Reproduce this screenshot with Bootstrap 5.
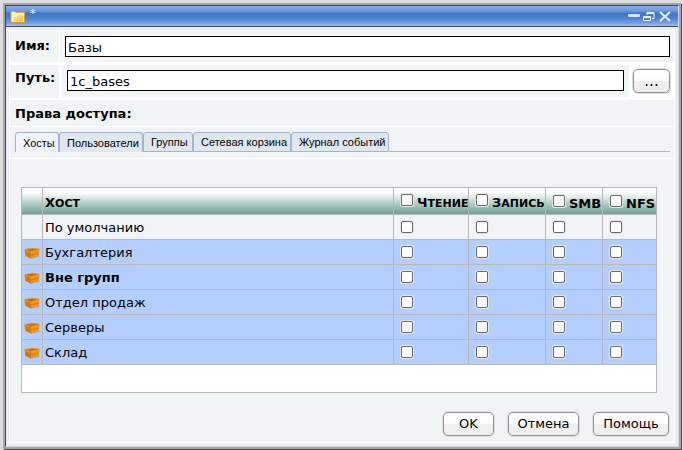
<!DOCTYPE html>
<html lang="ru">
<head>
<meta charset="utf-8">
<meta name="viewport" content="width=device-width, initial-scale=1">
<title>Базы</title>
<link href="https://cdn.jsdelivr.net/npm/bootstrap@5.3.0/dist/css/bootstrap.min.css" rel="stylesheet">
<style>
body{background:#dcdcdc;font:13px/16px "DejaVu Sans",Verdana,sans-serif;color:#000;padding:3px 1px 2px 3px;min-height:100vh}
.win-outer{border:2px solid #a4a7aa;box-shadow:1px 1px 0 #444;margin-right:1px;margin-bottom:1px;flex:1}
.win{border:1px solid #46484c;border-right-color:#d5d7dc;border-bottom-color:#d5d7dc;background:#ecedf5}
.title-bar{height:20px;padding:0 6px 0 4px;background:linear-gradient(#86aceb 0,#6d99dd 25%,#4078c5 36%,#4a82d0 60%,#7ba6ea 90%,#a9c5f0 100%);color:#fff;font-size:11px}
.title-bar button{border:0;background:none;padding:0;display:flex}
.win-body{border-top:1px solid #46484c;padding:3px}
.panel{background:#f0f4f4;border:1px solid #fff}
.lab{font-weight:700;padding:7px 0 0 5px}
.name-row{border-bottom:3px solid #fff}
.name-row .lab{width:50px;border-right:1px solid #fff}
.name-row .fld{padding:5px 4px 5px 5px}
.path-row{border-bottom:1px solid #fff;min-height:35px;background:#fff}
.path-row .lab{width:49px;background:#f0f4f4;padding-top:5px;margin-bottom:1px}
.path-row .fld{margin:0 0 2px 3px;padding:5px 5px 4px;background:#f0f4f4}
.txt{width:100%;height:21px;border:1px solid #000;border-radius:0;padding:2px 2px 0;background:#fff;color:#000;display:block;outline-offset:0}
.push{height:24px;border:1px solid #909090;border-radius:5px;background:linear-gradient(#fff,#fcfcfc 50%,#f0f0f0 51%,#eeeeee);box-shadow:0 0 0 1px #dfe1e1;padding:0;color:#000}
.browse{width:37px;margin:4px 4px 0;font-size:15px}
.w-ok{width:51px}.w-cancel{width:71px}.w-help{width:76px}
.rights{font-weight:700;padding:6px 0 0 5px;height:27px;border-bottom:1px solid #fff}
.tabs{height:32px;padding:5px 4px 0 5px;border-bottom:1px solid #fff}
.tabs button{height:20px;border:1px solid #a4b3ce;border-bottom:0;border-radius:3px 3px 0 0;background:#dfe7ef;font:11px/18px "Liberation Sans",Arial,sans-serif;color:#000;padding:0 0 0 7px;white-space:nowrap;text-align:left}
.tabs button.on{background:#f1f4fa}
.t1{width:44px}.t2{width:84px}.t3{width:50px}.t4{width:98px}.t5{width:98px}
.tab-rest{border-bottom:1px solid #a4b3ce;height:20px}
.tabs .under{border-bottom:1px solid #a4b3ce}
.grid-wrap{padding:28px 17px 0 11px}
.grid-box{background:#fff;border:1px solid #b8b8b8;padding-bottom:27px}
.grid-tbl{width:100%;table-layout:fixed;border-collapse:separate;border-spacing:0}
.grid-tbl th,.grid-tbl td{border:0 solid #b8b8b8;border-width:0 1px 1px 0;padding:2px 0 0 2px;height:25px;vertical-align:middle;white-space:nowrap}
.grid-tbl tr>:last-child{border-right:0}
.grid-tbl th{height:27px;background:linear-gradient(#fff 0,#fbfcfc 20%,#b9d3cd 55%,#6ea396 100%);padding-top:4px}
.caps{display:block;font-size:11px;text-transform:uppercase}
.caps::first-letter{font-size:13px}
.grid-tbl tbody tr{background:#b3cfff}
.grid-tbl tbody tr.base{background:#f0f4f4}
.grid-tbl .ck{padding:0 0 0 7px}
.grid-tbl th.ck label{padding-top:5px;margin-left:4px}
.c-ic{width:21px}.c-rd{width:75px}.c-wr{width:77px}.c-smb{width:57px}.c-nfs{width:53px}
.box{appearance:none;width:12px;height:12px;border:1px solid #686868;border-radius:2px;background:#fff;box-shadow:0 0 0 1px #e6e6e6;margin:0;display:block;flex:none}
.box:checked{background:#4078c5}
.foot{padding:19px 5px 6px;gap:14px}
</style>
<script src="https://cdn.jsdelivr.net/npm/bootstrap@5.3.0/dist/js/bootstrap.bundle.min.js"></script>
</head>
<body class="d-flex flex-column">
<svg width="0" height="0" class="position-absolute" aria-hidden="true"><defs>
<linearGradient id="fg" x2="1" y2="1"><stop stop-color="#fff3a4"/><stop offset="1" stop-color="#e9b92f"/></linearGradient>
<symbol id="crate" viewBox="0 0 16 12"><path d="M1 8l6 4 9-2-1-2z" fill="#667" opacity=".25"/><path d="M.5 2.500L7 4v7.500L1.500 9z" fill="#d97a04"/><path d="M7 4l8.500-2-.8 7L7 11.500z" fill="#ee9418"/><path d="M.5 2.500L8 1l7.500 1L7 4.500z" fill="#c87209"/><path d="M.5 2.500L8 1l7.500 1v1L7 5.200.5 3.600z" fill="none" stroke="#f9a52c" stroke-width=".7"/><path d="M1 6.500l6 1.500 8-2" fill="none" stroke="#c36c04" stroke-width=".5"/></symbol>
</defs></svg>
<main class="win-outer d-flex flex-column">
<div class="win d-flex flex-column flex-fill">
 <header class="title-bar d-flex">
  <svg width="16" height="14" viewBox="0 0 16 14" class="mt-1"><path d="M1 12V1.500h4l1 1h8.500V12z" fill="#fff0b0" stroke="#e2a735"/><path d="M2.500 12V6.500h4l1-2h6V12z" fill="url(#fg)" stroke="#fff8d0" stroke-width=".8"/><path d="M1 12.500h14" stroke="#d59722"/></svg>
  <span class="ms-1">*</span>
  <div class="ms-auto d-flex align-items-start">
   <button type="button" aria-label="Свернуть"><svg width="14" height="20"><rect x="1" y="8" width="12" height="3" rx="1" fill="#d3def0"/></svg></button>
   <button type="button" aria-label="Восстановить"><svg width="17" height="20"><path d="M6 6.500h7v6h-2M6 6v3" fill="none" stroke="#e8f0fc"/><path d="M6 7.500h7" stroke="#e8f0fc"/><path d="M2.500 10.500h7v4h-7z" fill="#4c83cf" stroke="#e8f0fc"/><path d="M2 11.500h8" stroke="#e8f0fc"/></svg></button>
   <button type="button" aria-label="Закрыть"><svg width="14" height="20"><path d="M2 6l10 9M12 6L2 15" stroke="#e6eefb" stroke-width="2"/></svg></button>
  </div>
 </header>
 <form class="win-body flex-fill d-flex" onsubmit="return false">
 <div class="panel flex-fill d-flex flex-column">
  <div class="name-row d-flex"><label class="lab" for="nm">Имя:</label><div class="fld flex-fill"><input id="nm" class="txt" type="text" value="Базы"></div></div>
  <div class="path-row d-flex"><label class="lab" for="pt">Путь:</label><div class="fld flex-fill"><input id="pt" class="txt" type="text" value="1c_bases"></div><button type="button" class="push browse">...</button></div>
  <div class="rights">Права доступа:</div>
  <div class="tabs d-flex" role="tablist">
   <button type="button" role="tab" class="t1 on" aria-selected="true">Хосты</button>
   <button type="button" role="tab" class="t2">Пользователи</button>
   <button type="button" role="tab" class="t3 under">Группы</button>
   <button type="button" role="tab" class="t4 under">Сетевая корзина</button>
   <button type="button" role="tab" class="t5 under">Журнал событий</button>
   <div class="tab-rest flex-fill"></div>
  </div>
  <div class="grid-wrap"><div class="grid-box"><table class="grid-tbl">
   <colgroup><col class="c-ic"><col><col class="c-rd"><col class="c-wr"><col class="c-smb"><col class="c-nfs"></colgroup>
   <thead><tr><th></th><th scope="col"><span class="caps">Хост</span></th>
    <th scope="col" class="ck"><div class="d-flex"><input id="h1" class="box mt-1" type="checkbox"><label for="h1" class="caps">Чтение</label></div></th>
    <th scope="col" class="ck"><div class="d-flex"><input id="h2" class="box mt-1" type="checkbox"><label for="h2" class="caps">Запись</label></div></th>
    <th scope="col" class="ck"><div class="d-flex"><input id="h3" class="box mt-1" type="checkbox"><label for="h3">SMB</label></div></th>
    <th scope="col" class="ck"><div class="d-flex"><input id="h4" class="box mt-1" type="checkbox"><label for="h4">NFS</label></div></th></tr></thead>
   <tbody>
    <tr class="base"><td></td><td>По умолчанию</td><td class="ck"><input class="box" type="checkbox" aria-label="Чтение"></td><td class="ck"><input class="box" type="checkbox" aria-label="Запись"></td><td class="ck"><input class="box" type="checkbox" aria-label="SMB"></td><td class="ck"><input class="box" type="checkbox" aria-label="NFS"></td></tr>
    <tr><td><svg class="d-block" width="16" height="12"><use href="#crate"/></svg></td><td>Бухгалтерия</td><td class="ck"><input class="box" type="checkbox" aria-label="Чтение"></td><td class="ck"><input class="box" type="checkbox" aria-label="Запись"></td><td class="ck"><input class="box" type="checkbox" aria-label="SMB"></td><td class="ck"><input class="box" type="checkbox" aria-label="NFS"></td></tr>
    <tr><td><svg class="d-block" width="16" height="12"><use href="#crate"/></svg></td><td class="fw-bold">Вне групп</td><td class="ck"><input class="box" type="checkbox" aria-label="Чтение"></td><td class="ck"><input class="box" type="checkbox" aria-label="Запись"></td><td class="ck"><input class="box" type="checkbox" aria-label="SMB"></td><td class="ck"><input class="box" type="checkbox" aria-label="NFS"></td></tr>
    <tr><td><svg class="d-block" width="16" height="12"><use href="#crate"/></svg></td><td>Отдел продаж</td><td class="ck"><input class="box" type="checkbox" aria-label="Чтение"></td><td class="ck"><input class="box" type="checkbox" aria-label="Запись"></td><td class="ck"><input class="box" type="checkbox" aria-label="SMB"></td><td class="ck"><input class="box" type="checkbox" aria-label="NFS"></td></tr>
    <tr><td><svg class="d-block" width="16" height="12"><use href="#crate"/></svg></td><td>Серверы</td><td class="ck"><input class="box" type="checkbox" aria-label="Чтение"></td><td class="ck"><input class="box" type="checkbox" aria-label="Запись"></td><td class="ck"><input class="box" type="checkbox" aria-label="SMB"></td><td class="ck"><input class="box" type="checkbox" aria-label="NFS"></td></tr>
    <tr><td><svg class="d-block" width="16" height="12"><use href="#crate"/></svg></td><td>Склад</td><td class="ck"><input class="box" type="checkbox" aria-label="Чтение"></td><td class="ck"><input class="box" type="checkbox" aria-label="Запись"></td><td class="ck"><input class="box" type="checkbox" aria-label="SMB"></td><td class="ck"><input class="box" type="checkbox" aria-label="NFS"></td></tr>
   </tbody></table></div></div>
  <div class="foot d-flex justify-content-end"><button class="push w-ok" type="submit">OK</button><button class="push w-cancel" type="button">Отмена</button><button class="push w-help" type="button">Помощь</button></div>
 </div></form>
</div></main>
</body>
</html>
